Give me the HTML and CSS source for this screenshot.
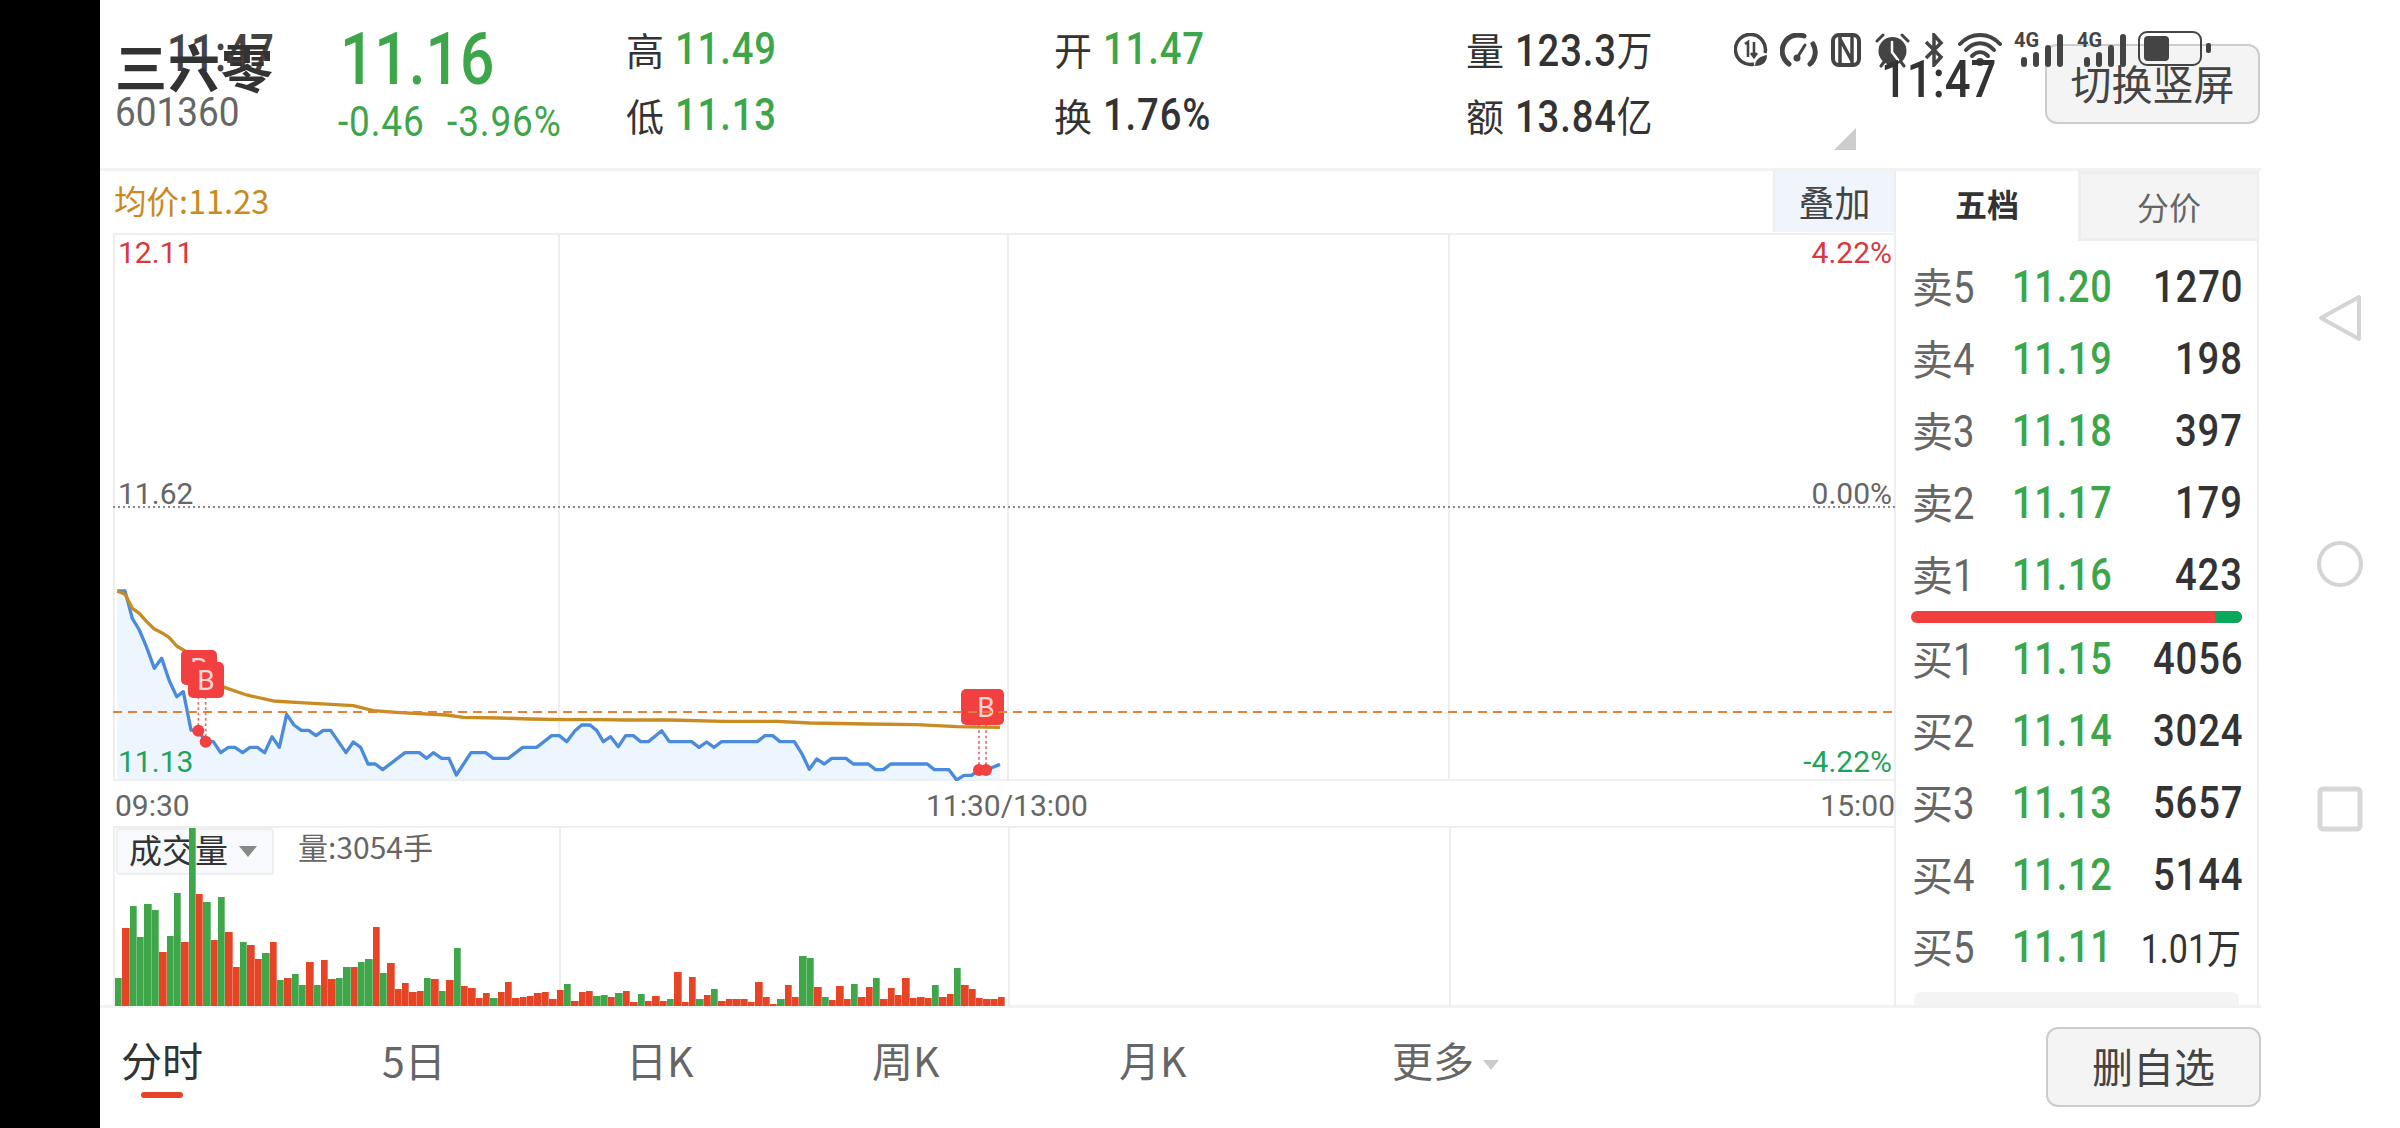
FILE: index.html
```html
<!DOCTYPE html>
<html lang="zh-CN">
<head>
  <meta charset="UTF-8">
  <title>三六零 601360</title>
  <link rel="stylesheet" href="styles.css">
</head>
<body>

  <div class="edge"></div>

  <div class="app">
    <div class="head">
      <div class="name">
        <div class="ghost-time">11:47</div>
        <div class="title">三六零</div>
        <div class="code">601360</div>
      </div>
      <div class="quote">
        <div class="last">11.16</div>
        <div class="change">-0.46 -3.96%</div>
      </div>
      <div class="stat">
        <div><span class="k">高</span><span class="v green">11.49</span></div>
        <div><span class="k">低</span><span class="v green">11.13</span></div>
      </div>
      <div class="stat">
        <div><span class="k">开</span><span class="v green">11.47</span></div>
        <div><span class="k">换</span><span class="v">1.76%</span></div>
      </div>
      <div class="stat">
        <div><span class="k">量</span><span class="v">123.3<b>万</b></span></div>
        <div><span class="k">额</span><span class="v">13.84<b>亿</b></span></div>
      </div>
      <div class="head-right">
        <div class="fold"></div>
        <button class="btn">切换竖屏</button>
      </div>
    </div>

    <div class="main">
      <div class="chart">
        <div class="toolbar">
          <span class="avg">均价:11.23</span>
          <span class="overlay-btn">叠加</span>
        </div>

        <div class="plot">
          <svg class="plot-svg" viewBox="113 233 1782 548" width="1782" height="548">
            <g class="grid">
              <line x1="113" y1="234" x2="1895" y2="234"/>
              <line x1="114" y1="233" x2="114" y2="781"/>
              <line x1="559" y1="233" x2="559" y2="781"/>
              <line x1="1008" y1="233" x2="1008" y2="781"/>
              <line x1="1449" y1="233" x2="1449" y2="781"/>
            </g>
            <line class="zero" x1="113" y1="507" x2="1895" y2="507"/>
            <g transform="translate(100 560) scale(.33333)">
              <polygon class="area" points="52,663 52,93 75,93 97,175 118,210 140,262 163,325 185,295 207,360 230,410 250,395 273,510 295,512 317,545 340,545 362,578 385,562 405,562 428,578 450,562 472,562 494,578 516,530 538,562 560,463 582,495 604,511 626,511 648,527 670,511 692,511 738,578 760,546 782,562 804,612 826,612 848,629 915,578 958,578 980,595 1000,578 1025,595 1047,595 1069,645 1113,578 1157,578 1180,595 1225,595 1268,562 1310,562 1355,527 1378,527 1400,545 1425,512 1445,495 1470,495 1490,511 1510,545 1532,530 1555,560 1577,527 1600,527 1622,545 1645,545 1685,512 1708,545 1775,545 1797,562 1820,546 1842,562 1865,545 1972,545 1995,527 2018,527 2040,545 2083,545 2105,580 2128,628 2150,597 2173,612 2195,595 2238,595 2260,612 2305,612 2327,629 2350,629 2372,612 2482,612 2503,629 2547,629 2570,660 2592,646 2615,646 2635,630 2658,630 2700,613 2700,663"/>
              <line class="base" x1="39" y1="661" x2="5400" y2="661"/>
              <polyline class="price" points="52,93 75,93 97,175 118,210 140,262 163,325 185,295 207,360 230,410 250,395 273,510 295,512 317,545 340,545 362,578 385,562 405,562 428,578 450,562 472,562 494,578 516,530 538,562 560,463 582,495 604,511 626,511 648,527 670,511 692,511 738,578 760,546 782,562 804,612 826,612 848,629 915,578 958,578 980,595 1000,578 1025,595 1047,595 1069,645 1113,578 1157,578 1180,595 1225,595 1268,562 1310,562 1355,527 1378,527 1400,545 1425,512 1445,495 1470,495 1490,511 1510,545 1532,530 1555,560 1577,527 1600,527 1622,545 1645,545 1685,512 1708,545 1775,545 1797,562 1820,546 1842,562 1865,545 1972,545 1995,527 2018,527 2040,545 2083,545 2105,580 2128,628 2150,597 2173,612 2195,595 2238,595 2260,612 2305,612 2327,629 2350,629 2372,612 2482,612 2503,629 2547,629 2570,660 2592,646 2615,646 2635,630 2658,630 2700,613"/>
              <polyline class="mean" points="52,93 75,103 97,145 118,160 140,185 163,207 185,218 207,232 230,258 250,270 273,285 373,382 440,405 520,423 600,428 760,437 820,452 900,458 1040,465 1090,472 1200,474 1290,477 1400,479 1500,479 1575,480 1710,480 1870,484 2030,484 2130,489 2300,492 2450,494 2570,500 2700,502"/>
              <line class="drop" x1="295" y1="410" x2="295" y2="512"/>
              <line class="drop" x1="317" y1="410" x2="317" y2="545"/>
              <line class="drop" x1="2637" y1="495" x2="2637" y2="630"/>
              <line class="drop" x1="2658" y1="495" x2="2658" y2="630"/>
              <circle class="dot" cx="295" cy="512" r="18"/>
              <circle class="dot" cx="317" cy="545" r="18"/>
              <circle class="dot" cx="2637" cy="630" r="18"/>
              <circle class="dot" cx="2658" cy="630" r="18"/>
            </g>
          </svg>

          <span class="mark m1">B</span>
          <span class="mark m2">B</span>
          <span class="mark m3"></span>
          <span class="mark m4">B</span>
          <div class="ref-line"></div>

          <span class="lbl red tl">12.11</span>
          <span class="lbl red tr">4.22%</span>
          <span class="lbl gray ml">11.62</span>
          <span class="lbl gray mr">0.00%</span>
          <span class="lbl down bl">11.13</span>
          <span class="lbl down br">-4.22%</span>
        </div>

        <div class="axis">
          <span>09:30</span>
          <span class="axis-mid">11:30/13:00</span>
          <span>15:00</span>
        </div>

        <div class="vol">
          <i class="vline v1"></i>
          <i class="vline v2"></i>
          <i class="vline v3"></i>
          <div class="vol-tag">成交量<em></em></div>
          <span class="vol-val">量:3054手</span>
          <div class="bars" id="bars"></div>
        </div>
      </div>

      <div class="depth">
        <div class="depth-tabs">
          <span class="on">五档</span>
          <span>分价</span>
        </div>
        <div class="rows">
          <div class="row"><span class="lab">卖<i>5</i></span><span class="p">11.20</span><span class="q">1270</span></div>
          <div class="row"><span class="lab">卖<i>4</i></span><span class="p">11.19</span><span class="q">198</span></div>
          <div class="row"><span class="lab">卖<i>3</i></span><span class="p">11.18</span><span class="q">397</span></div>
          <div class="row"><span class="lab">卖<i>2</i></span><span class="p">11.17</span><span class="q">179</span></div>
          <div class="row"><span class="lab">卖<i>1</i></span><span class="p">11.16</span><span class="q">423</span></div>
        </div>
        <div class="ratio"><div class="ratio-buy"></div></div>
        <div class="rows">
          <div class="row"><span class="lab">买<i>1</i></span><span class="p">11.15</span><span class="q">4056</span></div>
          <div class="row"><span class="lab">买<i>2</i></span><span class="p">11.14</span><span class="q">3024</span></div>
          <div class="row"><span class="lab">买<i>3</i></span><span class="p">11.13</span><span class="q">5657</span></div>
          <div class="row"><span class="lab">买<i>4</i></span><span class="p">11.12</span><span class="q">5144</span></div>
          <div class="row"><span class="lab">买<i>5</i></span><span class="p">11.11</span><span class="q small">1.01万</span></div>
        </div>
        <div class="pill"></div>
      </div>
    </div>

    <div class="foot">
      <div class="tabs">
        <span class="tab active">分时</span>
        <span class="tab">5日</span>
        <span class="tab">日K</span>
        <span class="tab">周K</span>
        <span class="tab">月K</span>
        <span class="tab">更多<em></em></span>
      </div>
      <button class="btn">删自选</button>
    </div>
  </div>

  <div class="sysnav">
    <svg width="44" height="48" viewBox="0 0 44 48"><path d="M41 3 L3 24 L41 45 Z" fill="none" stroke="#d4d4d4" stroke-width="4" stroke-linejoin="round"/></svg>
    <svg width="48" height="48" viewBox="0 0 48 48"><circle cx="24" cy="24" r="21" fill="none" stroke="#d4d4d4" stroke-width="4"/></svg>
    <svg width="46" height="46" viewBox="0 0 46 46"><rect x="3" y="3" width="40" height="40" rx="3" fill="none" stroke="#d8d8d8" stroke-width="5"/></svg>
  </div>

  <!-- status bar sits on top of the page in the capture -->
  <div class="status">
    <svg width="34" height="34" viewBox="0 0 34 34" fill="none" stroke="#444" stroke-width="3.500">
      <path d="M20 31 A15 15 0 1 1 31 20"/>
      <path d="M11 11 L14 9 V24 M20 9 V23 M17 20 L20 24 L23 20" stroke-width="2.6"/>
      <path d="M21 33 C21 26 27 23 33 22 C33 29 29 33 21 33 Z" fill="#444" stroke="none"/>
    </svg>
    <svg class="s2" width="38" height="34" viewBox="0 0 38 34" fill="none" stroke="#444" stroke-width="5" stroke-linecap="round">
      <path d="M9 31 A16 16 0 0 1 24 3"/>
      <path d="M33 11 A16 16 0 0 1 30 31"/>
      <path d="M17 25 L25 12" stroke-width="3"/>
      <circle cx="17" cy="25" r="3.500" fill="#444" stroke="none"/>
    </svg>
    <svg class="s3" width="30" height="34" viewBox="0 0 30 34" fill="none" stroke="#444" stroke-width="4">
      <rect x="2" y="2" width="26" height="30" rx="6"/>
      <path d="M9 4 V30 M21 4 V30 M9 6 L21 28" stroke-width="3.500"/>
    </svg>
    <svg class="s4" width="35" height="36" viewBox="0 0 35 36" fill="none" stroke="#444" stroke-linecap="round">
      <circle cx="17.500" cy="18" r="14" fill="#444" stroke="none"/>
      <path d="M17 9 V19 L23 27" stroke="#fff" stroke-width="2.500"/>
      <path d="M2 8 L8 2 M27 2 L33 8 M6 33 L9 29 M29 33 L26 29" stroke-width="3"/>
    </svg>
    <svg class="s5" width="20" height="34" viewBox="0 0 20 34" fill="none" stroke="#444" stroke-width="3.500">
      <path d="M2 9 L17 24 L10 32 V2 L17 10 L2 25"/>
    </svg>
    <svg class="s6" width="44" height="34" viewBox="0 0 44 34" fill="none" stroke="#444" stroke-width="4" stroke-linecap="round">
      <path d="M2 11 C13 -1 31 -1 42 11"/>
      <path d="M8 17 C16 8 28 8 36 17"/>
      <path d="M14 23 C19 18 25 18 30 23"/>
      <circle cx="22" cy="29" r="4" fill="#444" stroke="none"/>
    </svg>
    <div class="sig s7">
      <span class="g4">4G</span>
      <i class="b1"></i><i class="b2"></i><i class="b3"></i><i class="b4"></i>
    </div>
    <div class="sig s8">
      <span class="g4">4G</span>
      <i class="b1"></i><i class="b2"></i><i class="b3"></i><i class="b4"></i>
    </div>
    <div class="batt s9"><div class="batt-fill"></div></div>
    <div class="batt-nub"></div>
  </div>
  <div class="clock">11:47</div>

  <script src="chart.js"></script>
</body>
</html>
```

FILE: styles.css
```css
* {
  box-sizing: border-box;
}

html, body {
  margin: 0;
  padding: 0;
}

body {
  position: relative;
  display: flex;
  width: 2400px;
  height: 1128px;
  overflow: hidden;
  background-color: #fff;
  color: #333;
  font-family: "Noto Sans CJK SC", sans-serif;
  --num: "Roboto", "Noto Sans CJK SC", sans-serif;
}

.edge {
  width: 100px;
  background-color: #000;
}

.app {
  width: 2161px;
  display: flex;
  flex-direction: column;
}

.green { color: #3da64a; }
.red { color: #d9383e; }
.gray { color: #666; }
.down { color: #1fa35b; }

/* the app's digits are a narrow DIN, no such font here so Roboto gets squeezed */
.code, .last, .change, .v, .lab i, .p, .ghost-time, .clock, .avg {
  display: inline-block;
  transform-origin: left center;
}

/* header */
.head {
  height: 168px;
  padding-left: 15px;
  display: grid;
  grid-template-columns: 223px 288px 428px 412px 280px 1fr;
}

.name {
  position: relative;
  padding-top: 36px;
}

.ghost-time {
  position: absolute;
  left: 52px;
  top: 24px;
  font-family: var(--num);
  font-size: 52px;
  line-height: 60px;
  font-weight: 500;
  color: #444;
  transform: scaleX(.81);
}

.title {
  position: relative;
  font-size: 52px;
  line-height: 60px;
  font-weight: bold;
  color: #333;
  letter-spacing: 1px;
}

.code {
  display: block;
  margin-top: -3px;
  font-family: var(--num);
  font-size: 41px;
  line-height: 38px;
  color: #666;
  transform: scaleX(.9);
}

.last {
  display: block;
  margin-top: 18px;
  margin-left: 2px;
  font-family: var(--num);
  font-size: 72px;
  line-height: 84px;
  font-weight: 500;
  color: #3da64a;
  transform: scaleX(.84);
}

.change {
  display: block;
  font-family: var(--num);
  font-size: 42px;
  line-height: 40px;
  color: #3da64a;
  letter-spacing: 1px;
  word-spacing: 14px;
  white-space: nowrap;
  transform: scaleX(.88);
}

.stat {
  padding-top: 16px;
}

.stat > div {
  display: flex;
  align-items: center;
  height: 66px;
}

.k {
  width: 49px;
  font-size: 38px;
  line-height: 52px;
  color: #333;
}

.v {
  font-family: var(--num);
  font-size: 45px;
  line-height: 52px;
  font-weight: 500;
  letter-spacing: 1px;
  white-space: nowrap;
  transform: scaleX(.85);
}

.v b {
  font-family: "Noto Sans CJK SC", sans-serif;
  font-weight: normal;
  font-size: 42px;
}

.head-right {
  position: relative;
  display: flex;
  justify-content: flex-end;
  padding-top: 44px;
  padding-right: 1px;
}

.fold {
  position: absolute;
  left: 88px;
  top: 128px;
  width: 0;
  height: 0;
  border-left: 22px solid transparent;
  border-bottom: 22px solid #ccc;
}

.btn {
  width: 215px;
  height: 80px;
  padding: 0 0 4px;
  background-color: #f4f4f4;
  border: 2px solid #ccc;
  border-radius: 12px;
  color: #444;
  font-family: "Noto Sans CJK SC", sans-serif;
  font-size: 41px;
}

/* chart + depth */
.main {
  height: 840px;
  display: flex;
  border-top: 3px solid #f2f2f2;
  border-bottom: 3px solid #f2f2f2;
}

.chart {
  width: 1796px;
  padding-left: 13px;
  border-right: 2px solid #eee;
}

.toolbar {
  height: 62px;
  display: flex;
  justify-content: space-between;
  align-items: flex-start;
}

.avg {
  margin-left: 1px;
  margin-top: 6px;
  font-size: 32.500px;
  line-height: 46px;
  color: #c98a1e;
}

.overlay-btn {
  width: 121px;
  height: 61px;
  background-color: #f0f5fd;
  border-left: 2px solid #eee;
  text-align: center;
  font-size: 36px;
  line-height: 60px;
  color: #444;
}

.plot {
  position: relative;
  width: 1782px;
  height: 548px;
}

.plot-svg {
  position: absolute;
  left: 0;
  top: 0;
}

.grid line {
  stroke: #eee;
  stroke-width: 2;
}

.base {
  stroke: #eee;
  stroke-width: 6;
}

.zero {
  stroke: #888;
  stroke-width: 2;
  stroke-dasharray: 2 3;
}

.area { fill: #edf5fe; }

.price {
  fill: none;
  stroke: #4a8bdc;
  stroke-width: 10;
  stroke-linejoin: round;
}

.mean {
  fill: none;
  stroke: #c88c22;
  stroke-width: 10;
  stroke-linejoin: round;
}

.drop {
  stroke: #e46a6a;
  stroke-width: 5;
  stroke-dasharray: 8 8;
}

.dot { fill: #f23f3f; }

.mark {
  position: absolute;
  width: 36px;
  height: 36px;
  background-color: #f23f3f;
  border-radius: 5px;
  color: #fbd5d5;
  font-family: "Roboto", sans-serif;
  font-size: 28px;
  line-height: 37px;
  text-align: center;
}

.m1 { left: 68px; top: 417px; height: 35px; }
.m2 { left: 75px; top: 429px; }
.m3 { left: 848px; top: 456px; }
.m4 { left: 855px; top: 456px; }

.ref-line {
  position: absolute;
  left: 0;
  right: 0;
  top: 478px;
  height: 2px;
  background: repeating-linear-gradient(90deg, #e8803a 0 9px, transparent 9px 15px);
}

.lbl {
  position: absolute;
  font-family: "Roboto", sans-serif;
  font-size: 30px;
  line-height: 36px;
}

.tl { left: 5px; top: 2px; }
.tr { right: 3px; top: 2px; }
.ml { left: 5px; top: 243px; }
.mr { right: 3px; top: 243px; }
.bl { left: 5px; top: 511px; }
.br { right: 3px; top: 511px; }

.axis {
  position: relative;
  height: 45px;
  padding: 7px 0 0 2px;
  display: flex;
  justify-content: space-between;
  width: 1782px;
  font-family: "Roboto", sans-serif;
  font-size: 30px;
  line-height: 36px;
  color: #666;
}

.axis-mid {
  position: absolute;
  left: 813px;
}

.vol {
  position: relative;
  width: 1782px;
  height: 180px;
  border-top: 2px solid #eee;
  border-left: 2px solid #eee;
}

.vline {
  position: absolute;
  top: 0;
  bottom: 0;
  width: 2px;
  background-color: #eee;
}

.v1 { left: 444px; }
.v2 { left: 893px; }
.v3 { left: 1334px; }

.vol-tag {
  position: absolute;
  left: 1px;
  top: 0;
  width: 158px;
  height: 47px;
  padding-left: 11px;
  background-color: #f7f9fd;
  border: 2px solid #eee;
  border-radius: 4px;
  font-size: 33px;
  line-height: 38px;
}

.vol-tag em {
  position: absolute;
  left: 121px;
  top: 16px;
  border-left: 9px solid transparent;
  border-right: 9px solid transparent;
  border-top: 11px solid #888;
}

.vol-val {
  position: absolute;
  left: 183px;
  top: 0;
  font-size: 30px;
  line-height: 36px;
  color: #666;
}

.bars {
  position: absolute;
  left: 0;
  bottom: 0;
  height: 178px;
  display: flex;
  align-items: flex-end;
}

.bars i {
  flex: 0 0 7.370px;
  border-right: 1px solid rgba(255, 255, 255, 0.3);
}

.bars .g { background-color: #3fa64a; }
.bars .r { background-color: #e64525; }

/* five levels */
.depth {
  width: 363px;
  padding: 0 16px 0 17px;
  border-right: 2px solid #eee;
  display: flex;
  flex-direction: column;
}

.depth-tabs {
  display: flex;
  height: 71px;
  margin: 0 -16px 10px -17px;
  font-size: 32px;
  line-height: 64px;
  text-align: center;
}

.depth-tabs span {
  flex: 1;
  background-color: #f4f4f4;
  border: 3px solid #eee;
  border-right: 0;
  color: #666;
}

.depth-tabs .on {
  flex: 0 0 182px;
  background-color: #fff;
  border: 0;
  font-weight: bold;
  color: #333;
}

.row {
  height: 72px;
  padding-bottom: 2px;
  display: flex;
  align-items: center;
}

.lab {
  width: 99px;
  flex: none;
  margin-left: -1px;
  margin-right: 1px;
  font-size: 41px;
  line-height: 60px;
  color: #666;
}

.lab i {
  font-family: var(--num);
  font-style: normal;
  font-size: 45px;
  margin-left: 0;
  transform: scaleX(.85);
}

.p {
  width: 100px;
  flex: none;
  font-family: var(--num);
  font-size: 45px;
  font-weight: 500;
  letter-spacing: 1px;
  white-space: nowrap;
  color: #3da64a;
  transform: scaleX(.84);
}

.q {
  margin-left: auto;
  margin-right: -2px;
  display: inline-block;
  font-family: var(--num);
  font-size: 45px;
  font-weight: 500;
  letter-spacing: 1px;
  color: #333;
  white-space: nowrap;
  transform: scaleX(.85);
  transform-origin: right center;
}

.q.small {
  margin-right: 0;
  font-size: 40px;
  font-weight: normal;
  letter-spacing: 0;
}

.ratio {
  height: 12px;
  margin: 0 -1px 0 -2px;
  background-color: #f23f3f;
  border-radius: 6px;
  display: flex;
  justify-content: flex-end;
  overflow: hidden;
}

.ratio-buy {
  width: 27px;
  background-color: #0aa85a;
}

.pill {
  height: 13px;
  margin-top: 9px;
  margin-left: 1px;
  margin-right: 2px;
  background-color: #f4f4f4;
  border-radius: 8px 8px 0 0;
}

/* bottom row */
.foot {
  flex: 1;
  display: flex;
  justify-content: space-between;
  padding-top: 19px;
}

.tabs {
  display: flex;
  padding-left: 21px;
  font-size: 41px;
  color: #666;
}

.tab {
  position: relative;
  line-height: 50px;
  padding-top: 7px;
  width: 247px;
}

.tab:nth-child(1) { width: 261px; }
.tab:nth-child(2) { width: 244px; }
.tab:nth-child(3) { width: 246px; }
.tab:nth-child(5) { width: 273px; }

.tab.active { color: #333; }

.tab.active::after {
  content: "";
  position: absolute;
  left: 20px;
  top: 65px;
  width: 42px;
  height: 6px;
  background-color: #e64525;
  border-radius: 3px;
}

.tab em {
  display: inline-block;
  margin-left: 9px;
  vertical-align: 7px;
  border-left: 8px solid transparent;
  border-right: 8px solid transparent;
  border-top: 10px solid #ccc;
}

/* android nav on the right */
.sysnav {
  width: 139px;
  padding: 294px 0 0 19px;
  display: flex;
  flex-direction: column;
  align-items: center;
  gap: 198px;
}

/* status bar */
.status {
  position: absolute;
  left: 1734px;
  top: 31px;
  display: flex;
  align-items: flex-start;
}

.status svg { margin-top: 2px; }
.s2 { margin-left: 12px; }
.s3 { margin-left: 13px; }
.s4 { margin-left: 14px; }
.s5 { margin-left: 14px; }
.s6 { margin-left: 14px; }

.sig {
  position: relative;
  width: 51px;
  height: 36px;
  margin-left: 12px;
}

.sig i {
  position: absolute;
  bottom: 0;
  width: 6px;
  background-color: #444;
  border-radius: 3px;
}

.b1 { left: 7px; height: 10px; }
.b2 { left: 19px; height: 15px; }
.b3 { left: 31px; height: 22px; }
.b4 { left: 43px; height: 33px; }

.g4 {
  position: absolute;
  left: 0;
  top: 0;
  font-family: var(--num);
  font-size: 21px;
  line-height: 18px;
  font-weight: bold;
  color: #444;
  transform: scaleX(.95);
  transform-origin: left center;
}

.batt {
  width: 64px;
  height: 35px;
  margin-left: 10px;
  padding: 3px 4px;
  border: 2.5px solid #444;
  border-radius: 9px;
}

.batt-fill {
  width: 25px;
  height: 100%;
  background-color: #444;
  border-radius: 4px;
}

.batt-nub {
  width: 5px;
  height: 10px;
  margin: 12px 0 0 4px;
  background-color: #444;
  border-radius: 2px;
}

.clock {
  position: absolute;
  left: 1881px;
  top: 50px;
  font-family: var(--num);
  font-size: 52px;
  line-height: 60px;
  font-weight: 500;
  color: #333;
  transform: scaleX(.875);
}
```

FILE: chart.js
```js
// volume bars, top of each bar read off the chart (baseline 588, 3 units per px)
const bars = "g503 r355 g288 g382 g283 g300 r427 g378 g249 r396 g54 r252 g277 r390 g261 r367 r470 g395 r405 r446 g428 r395 g510 r503 g492 g525 r457 g524 r450 r506 g503 g470 r471 g457 g446 r352 g489 r459 r537 r519 r546 r542 g503 r508 g543 r510 g414 r527 r535 r564 r550 g565 r547 r516 r563 r561 r557 r548 r546 r568 r540 g523 r573 r545 r543 g558 g555 r562 g549 r543 r575 g552 r572 r557 r573 g567 r486 r577 r501 g568 r556 g537 r572 r568 r566 r566 r575 r517 r562 r581 g567 r526 r562 g439 g443 r531 g561 r570 r528 r567 g523 r562 r531 g504 r566 r534 r556 r504 r564 r562 r564 g525 r561 r552 g475 r526 r537 r565 r566 r566 r560";

const box = document.getElementById("bars");

bars.split(" ").forEach(function (b) {
  const bar = document.createElement("i");
  bar.className = b[0];
  bar.style.height = ((588 - Number(b.slice(1))) / 3).toFixed(1) + "px";
  box.appendChild(bar);
});
```
